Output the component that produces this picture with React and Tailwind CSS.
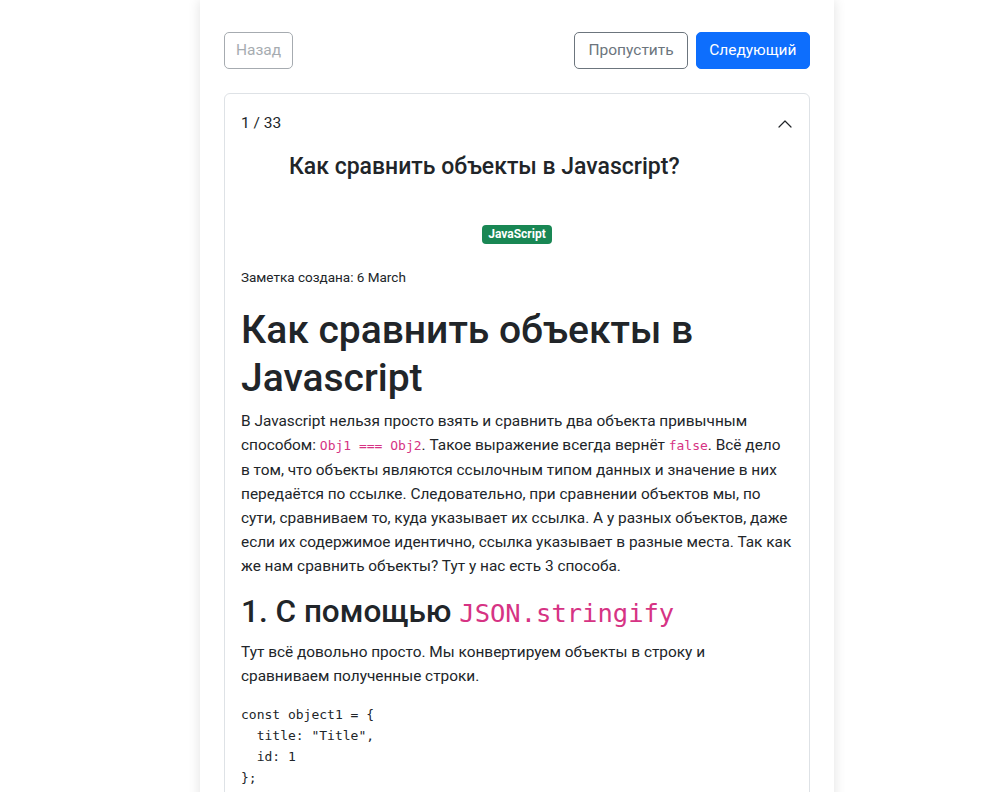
import React from 'react'

const sans = { fontFamily: 'Roboto, "Noto Sans", sans-serif' }
const mono = { fontFamily: '"DejaVu Sans Mono", "Liberation Mono", monospace' }

function Chevron() {
  return (
    <svg width="16" height="16" viewBox="0 0 16 16" fill="none">
      <path d="M2 11 L8 5 L14 11" stroke="#212529" strokeWidth="1.2" strokeLinecap="round" strokeLinejoin="round" />
    </svg>
  )
}

export default function App() {
  return (
    <div className="min-h-screen bg-white text-[#212529]" style={sans}>
      <div className="ml-[200px] w-[634px] bg-white shadow-[0_0_12px_rgba(0,0,0,0.12)] px-6 pt-8 pb-10 min-h-[800px]">
        {/* Navigation buttons */}
        <div className="flex items-center">
          <button className="h-[37px] px-[11px] rounded-[5px] border border-[#6c757d] text-[#6c757d] opacity-60 text-[15.5px]">
            Назад
          </button>
          <div className="ml-auto flex gap-2">
            <button className="h-[37px] px-[13px] rounded-[5px] border border-[#6c757d] text-[#6c757d] text-[15.5px]">
              Пропустить
            </button>
            <button className="h-[37px] px-[12.5px] rounded-[5px] bg-[#0d6efd] border border-[#0d6efd] text-white text-[15.5px]">
              Следующий
            </button>
          </div>
        </div>

        {/* Accordion */}
        <div className="mt-[24px] border border-[#dee2e6] rounded-[6px]">
          <div className="flex items-center pl-4 pr-4 h-[60px] text-[15.5px]">
            <span>1 / 33</span>
            <span className="ml-auto"><Chevron /></span>
          </div>

          <div className="px-4 pb-6">
            <h4 className="pl-12 text-[23px] font-medium leading-[30px] -mt-[2px]">
              Как сравнить объекты в Javascript?
            </h4>
            <div className="flex justify-center mt-[43px]">
              <span className="bg-[#198754] text-white text-[12px] font-bold rounded-[4px] px-[6px] leading-[19px]">
                JavaScript
              </span>
            </div>
            <p className="mt-[23px] text-[13.5px] leading-5">Заметка создана: 6 March</p>

            <h1 className="mt-[19px] text-[39px] font-medium leading-[48px]">
              Как сравнить объекты в Javascript
            </h1>
            <p className="mt-[7px] text-[15.4px] leading-6">
              В Javascript нельзя просто взять и сравнить два объекта привычным способом:{' '}
              <code className="text-[#d63384] text-[13px]" style={mono}>Obj1 === Obj2</code>. Такое выражение всегда вернёт{' '}
              <code className="text-[#d63384] text-[13px]" style={mono}>false</code>. Всё дело в том, что объекты являются ссылочным типом данных и значение в них передаётся по ссылке. Следовательно, при сравнении объектов мы, по сути, сравниваем то, куда указывает их ссылка. А у разных объектов, даже если их содержимое идентично, ссылка указывает в разные места. Так как же нам сравнить объекты? Тут у нас есть 3 способа.
            </p>

            <h2 className="mt-[15px] text-[31.5px] font-medium leading-[38px]">
              1. С помощью{' '}
              <code className="text-[#d63384] text-[25.5px] font-normal" style={mono}>JSON.stringify</code>
            </h2>
            <p className="mt-[8px] text-[15.4px] leading-6">
              Тут всё довольно просто. Мы конвертируем объекты в строку и сравниваем полученные строки.
            </p>
            <pre className="mt-[16px] text-[13px] leading-[21px]" style={mono}>{`const object1 = {
  title: "Title",
  id: 1
};`}</pre>
          </div>
        </div>
      </div>
    </div>
  )
}
